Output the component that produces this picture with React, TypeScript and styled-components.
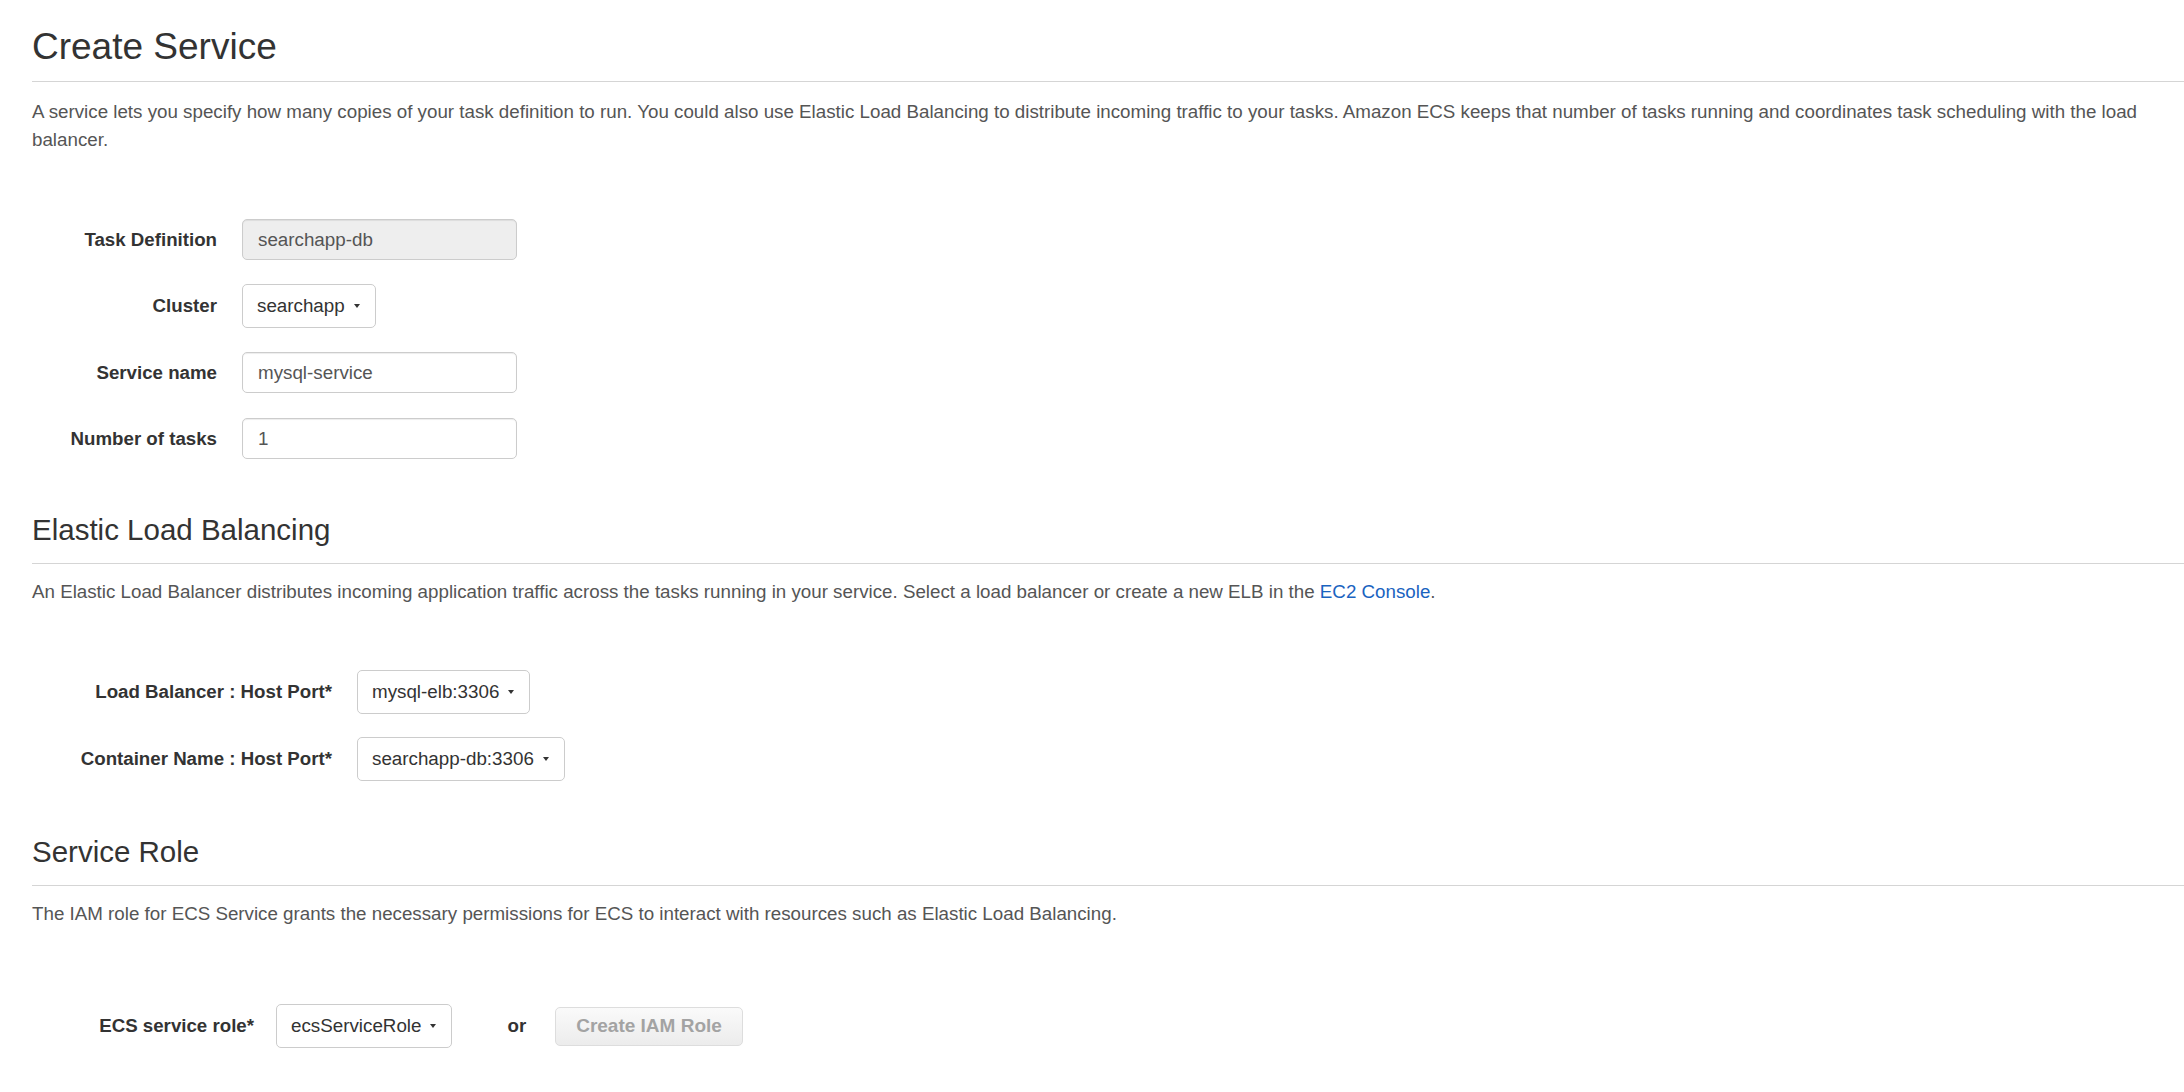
import styled, { createGlobalStyle } from "styled-components"

const GlobalStyle = createGlobalStyle`
html, body {
  margin: 0;
  padding: 0;
  background: #fff;
}
body {
  font-family: "Liberation Sans", Arial, Helvetica, sans-serif;
  color: #444;
}
`

const Page = styled.div`
padding: 25px 0 40px 32px;
`

const Header = styled.div<{ $top?: number }>`
margin-top: ${(p) => p.$top ?? 0}px;
border-bottom: 1px solid #d5d5d5;
`

const Title = styled.h1`
margin: 0;
padding-bottom: 12px;
font-size: 37px;
line-height: 44px;
font-weight: 400;
color: #333;
`

const SubTitle = styled.h2`
margin: 0;
padding-bottom: 15px;
font-size: 29.5px;
line-height: 36px;
font-weight: 400;
color: #333;
`

const Description = styled.p<{ $top?: number }>`
margin: ${(p) => p.$top ?? 15}px 0 0 0;
font-size: 18.75px;
line-height: 28px;
color: #555;
`

const Link = styled.a`
color: #1a63bf;
text-decoration: none;
cursor: pointer;
`

const Form = styled.form<{ $top?: number }>`
display: flex;
flex-direction: column;
gap: 23px;
margin-top: ${(p) => p.$top ?? 64}px;
`

const Row = styled.div<{ $gap?: number }>`
display: flex;
align-items: center;
gap: ${(p) => p.$gap ?? 25}px;
min-height: 43px;
`

const Label = styled.label<{ $width: number }>`
width: ${(p) => p.$width}px;
flex-shrink: 0;
text-align: right;
font-size: 18.7px;
font-weight: 700;
color: #333;
`

const Input = styled.input<{ $disabled?: boolean }>`
box-sizing: border-box;
width: 275px;
height: 41px;
padding: 0 15px;
border: 1px solid #ccc;
border-radius: 5px;
background: ${(p) => (p.$disabled ? "#eee" : "#fff")};
box-shadow: inset 0 1px 1px rgba(0, 0, 0, 0.075);
font-family: inherit;
font-size: 18.8px;
color: #555;
outline: none;
`

const Dropdown = styled.button`
display: inline-flex;
align-items: center;
gap: 9px;
box-sizing: border-box;
height: 44px;
padding: 0 15px 0 14px;
border: 1px solid #ccc;
border-radius: 5px;
background: #fff;
font-family: inherit;
font-size: 18.8px;
color: #333;
cursor: pointer;
`

const Caret = styled.span`
display: inline-block;
width: 0;
height: 0;
border-top: 4px solid #333;
border-left: 3.5px solid transparent;
border-right: 3.5px solid transparent;
`

const Or = styled.span`
margin: 0 7px 0 33px;
font-size: 18.7px;
font-weight: 700;
color: #333;
`

const DisabledButton = styled.button`
box-sizing: border-box;
height: 39px;
padding: 0 20px;
border: 1px solid #ddd;
border-radius: 5px;
background: linear-gradient(#fafafa, #ececec);
font-family: inherit;
font-size: 19px;
font-weight: 700;
color: #a3a3a3;
cursor: not-allowed;
`

const Select = ({ value }: { value: string }) => (
  <Dropdown type="button">
    {value}
    <Caret />
  </Dropdown>
)

export default function App() {
  return (
    <>
      <GlobalStyle />
      <Page>
        <Header>
          <Title>Create Service</Title>
        </Header>
        <Description $top={16}>
          A service lets you specify how many copies of your task definition to run. You could also use Elastic Load
          Balancing to distribute incoming traffic to your tasks. Amazon ECS keeps that number of tasks running and
          coordinates task scheduling with the load balancer.
        </Description>

        <Form>
          <Row>
            <Label $width={185}>Task Definition</Label>
            <Input $disabled disabled defaultValue="searchapp-db" />
          </Row>
          <Row>
            <Label $width={185}>Cluster</Label>
            <Select value="searchapp" />
          </Row>
          <Row>
            <Label $width={185}>Service name</Label>
            <Input defaultValue="mysql-service" />
          </Row>
          <Row>
            <Label $width={185}>Number of tasks</Label>
            <Input defaultValue="1" />
          </Row>
        </Form>

        <Header $top={52}>
          <SubTitle>Elastic Load Balancing</SubTitle>
        </Header>
        <Description $top={14}>
          An Elastic Load Balancer distributes incoming application traffic across the tasks running in your service.
          Select a load balancer or create a new ELB in the <Link>EC2 Console</Link>.
        </Description>

        <Form>
          <Row>
            <Label $width={300}>Load Balancer : Host Port*</Label>
            <Select value="mysql-elb:3306" />
          </Row>
          <Row>
            <Label $width={300}>Container Name : Host Port*</Label>
            <Select value="searchapp-db:3306" />
          </Row>
        </Form>

        <Header $top={53}>
          <SubTitle>Service Role</SubTitle>
        </Header>
        <Description $top={14}>
          The IAM role for ECS Service grants the necessary permissions for ECS to interact with resources such as
          Elastic Load Balancing.
        </Description>

        <Form $top={76}>
          <Row $gap={22}>
            <Label $width={222}>ECS service role*</Label>
            <Select value="ecsServiceRole" />
            <Or>or</Or>
            <DisabledButton type="button" disabled>
              Create IAM Role
            </DisabledButton>
          </Row>
        </Form>
      </Page>
    </>
  )
}
